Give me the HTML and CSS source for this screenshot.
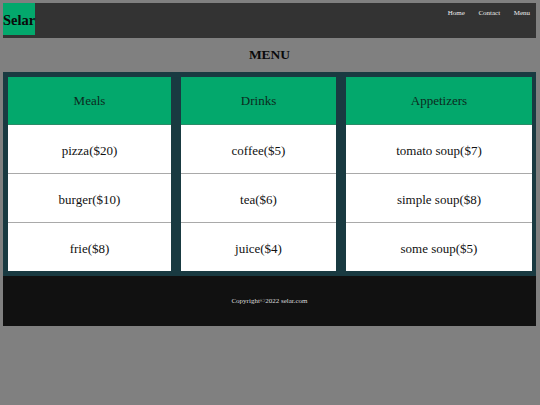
FILE: index.html
```html
<!DOCTYPE html>
<html lang="en">
<head>
<meta charset="utf-8">
<title>Selar Menu</title>
<link rel="stylesheet" href="styles.css">
</head>
<body>
<header class="topbar">
  <div class="logo">Selar</div>
  <nav class="nav">
    <a href="#" class="nav-link">Home</a>
    <a href="#" class="nav-link">Contact</a>
    <a href="#" class="nav-link">Menu</a>
  </nav>
</header>
<h1 class="title">MENU</h1>
<section class="menu">
  <div class="col">
    <div class="cell head">Meals</div>
    <div class="cell">pizza($20)</div>
    <div class="cell">burger($10)</div>
    <div class="cell last">frie($8)</div>
  </div>
  <div class="col">
    <div class="cell head">Drinks</div>
    <div class="cell">coffee($5)</div>
    <div class="cell">tea($6)</div>
    <div class="cell last">juice($4)</div>
  </div>
  <div class="col">
    <div class="cell head">Appetizers</div>
    <div class="cell">tomato soup($7)</div>
    <div class="cell">simple soup($8)</div>
    <div class="cell last">some soup($5)</div>
  </div>
</section>
<footer class="footer">Copyright©2022 selar.com</footer>
</body>
</html>
```
FILE: styles.css
```css
html, body {
  background: #808080;
}
body {
  margin: 3px 4px 3px 3px;
  font-family: "Liberation Serif", "Times New Roman", serif;
  color: #111;
}
.topbar {
  display: flex;
  justify-content: space-between;
  align-items: flex-start;
  height: 35px;
  background: #333333;
}
.logo {
  height: 32px;
  line-height: 35px;
  background: #03a86c;
  color: #0a0a0a;
  font-weight: bold;
  font-size: 14.5px;
}
.nav {
  display: flex;
  padding-right: 6px;
  padding-top: 6px;
}
.nav-link {
  color: #eeeeee;
  text-decoration: none;
  font-size: 7px;
  line-height: 8px;
  margin-left: 13.5px;
}
.title {
  margin: 0;
  height: 34px;
  display: flex;
  align-items: center;
  justify-content: center;
  font-size: 13.5px;
  font-weight: bold;
  color: #0a0a0a;
}
.menu {
  display: grid;
  grid-template-columns: 163fr 155fr 186fr;
  gap: 10px;
  padding: 5px 4px 5px 5px;
  background: #193a41;
}
.col {
  display: flex;
  flex-direction: column;
}
.cell {
  height: 45px;
  padding-top: 3px;
  display: flex;
  align-items: center;
  justify-content: center;
  background: #ffffff;
  border-bottom: 1px solid #a9a9a9;
  font-size: 13px;
  color: #111;
}
.cell.head {
  height: 46px;
  padding-top: 1px;
  background: #03a86c;
  border-bottom: 1px solid #2a8c68;
  color: #0c2a1e;
}
.cell.last {
  border-bottom: none;
}
.footer {
  height: 50px;
  display: flex;
  align-items: center;
  justify-content: center;
  background: #111111;
  color: #dddddd;
  font-size: 7px;
}
```
